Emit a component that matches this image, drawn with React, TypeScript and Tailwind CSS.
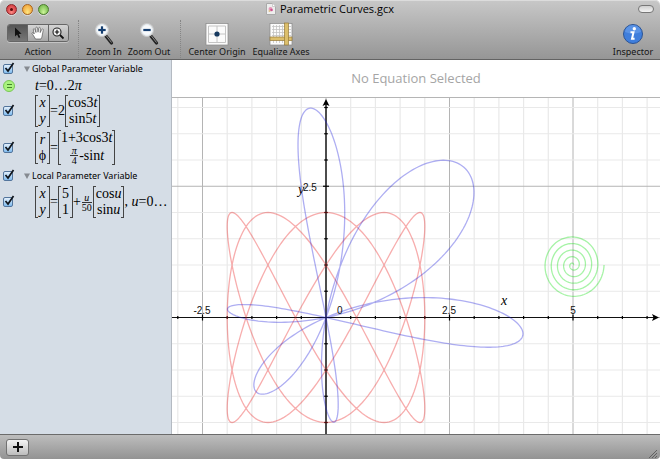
import { type ReactNode } from "react";

const UI = "font-['Noto_Sans','Open_Sans',sans-serif]";

/* ---------- Plot geometry ---------- */
const W = 488;
const H = 336;
const OX = 154;
const OY = 219.5;
const SX = 49.4;
const SY = 52.5;

const px = (x: number) => OX + x * SX;
const py = (y: number) => OY - y * SY;

function curve(fn: (t: number) => [number, number], end: number, steps: number) {
  const points: string[] = [];
  for (let i = 0; i <= steps; i++) {
    const [x, y] = fn((i / steps) * end);
    points.push(`${px(x).toFixed(2)},${py(y).toFixed(2)}`);
  }
  return points.join(" ");
}

const lissajous = curve((t) => [2 * Math.cos(3 * t), 2 * Math.sin(5 * t)], 2 * Math.PI, 600);
const rose = curve(
  (t) => {
    const r = 1 + 3 * Math.cos(3 * t);
    const a = Math.PI / 4 - Math.sin(t);
    return [r * Math.cos(a), r * Math.sin(a)];
  },
  2 * Math.PI,
  600,
);
const spiral = curve((u) => [5 + (u / 50) * Math.cos(u), 1 + (u / 50) * Math.sin(u)], 10 * Math.PI, 500);

const xSteps = Array.from({ length: 20 }, (_, i) => i - 6);
const ySteps = Array.from({ length: 13 }, (_, i) => i - 4);

function Plot() {
  return (
    <svg
      viewBox={`0 0 ${W} ${H}`}
      preserveAspectRatio="xMidYMid slice"
      className="block h-full w-full"
      role="img"
      aria-label="Graph of three parametric curves"
    >
      {xSteps.map((i) => (
        <line key={i} x1={px(i / 2)} x2={px(i / 2)} y1={0} y2={H} stroke={i % 5 === 0 ? "#b4b4b4" : "#e9e9e9"} strokeWidth={i % 5 === 0 ? 1 : 1.2} />
      ))}
      {ySteps.map((i) => (
        <line key={i} x1={0} x2={W} y1={py(i / 2)} y2={py(i / 2)} stroke={i % 5 === 0 ? "#b4b4b4" : "#e9e9e9"} strokeWidth={i % 5 === 0 ? 1 : 1.2} />
      ))}
      <line x1={OX} x2={OX} y1={6} y2={H} stroke="#4c4c4c" strokeWidth={2} />
      <line x1={0} x2={W - 5} y1={OY} y2={OY} stroke="#111" strokeWidth={1.2} />
      <path d={`M${OX} 1 l3.5 7 l-3.5 -1.5 l-3.5 1.5z`} fill="#000" />
      <path d={`M${W - 1} ${OY} l-7 -3.5 l1.5 3.5 l-1.5 3.5z`} fill="#000" />
      {xSteps.filter((i) => i !== 0).map((i) => (
        <line key={i} x1={px(i / 2)} x2={px(i / 2)} y1={OY - (i % 5 ? 1.5 : 3)} y2={OY + (i % 5 ? 1.5 : 3)} stroke="#000" strokeWidth={1.2} />
      ))}
      {ySteps.filter((i) => i !== 0).map((i) => (
        <line key={i} y1={py(i / 2)} y2={py(i / 2)} x1={OX - (i % 5 ? 1.8 : 3)} x2={OX + (i % 5 ? 1.8 : 3)} stroke="#000" strokeWidth={1.2} />
      ))}
      <g fill="none" strokeWidth={1.3}>
        <polyline points={lissajous} stroke="#e81c1c" strokeOpacity={0.36} />
        <polyline points={rose} stroke="#1f1fdc" strokeOpacity={0.36} />
        <polyline points={spiral} stroke="#20e020" strokeOpacity={0.4} />
      </g>
      <g className="font-['Liberation_Sans',sans-serif] text-[10px]" fill="#111">
        <text x={30} y={216} textAnchor="middle">-2.5</text>
        <text x={165} y={216}>0</text>
        <text x={277} y={216} textAnchor="middle">2.5</text>
        <text x={401} y={216} textAnchor="middle">5</text>
        <text x={131} y={93}>2.5</text>
      </g>
      <g className="font-['Liberation_Serif',serif] text-[14px] italic" fill="#000">
        <text x={126} y={96}>y</text>
        <text x={329} y={207}>x</text>
      </g>
    </svg>
  );
}

/* ---------- Window chrome ---------- */
function Light({ label, tone }: { label: string; tone: string }) {
  return (
    <button aria-label={label} className={`grid size-[11px] place-items-center rounded-full border shadow-[0_1px_0_#d8d8d8] ${tone}`}>
      {label === "Close" && <span className="size-[3px] rounded-full bg-[#5a0a0c]" />}
    </button>
  );
}

function Tool({ label, width, children }: { label: string; width: string; children: ReactNode }) {
  return (
    <button className={`flex flex-col items-center ${width}`}>
      <span className="flex h-[25px] items-center">{children}</span>
      <span className="whitespace-nowrap text-[9px] leading-[12px]">{label}</span>
    </button>
  );
}

function Magnifier({ plus }: { plus?: boolean }) {
  return (
    <svg viewBox="0 0 20 24" className="h-6 w-5">
      <path d="M11.500 13.500 L17.500 21" stroke="#222" strokeWidth="3.2" strokeLinecap="round" />
      <path d="M12.5 14 L17.5 20.5" stroke="#999" strokeWidth="0.9" />
      <circle cx="8" cy="8" r="6.3" fill="#f8fafc" stroke="#c9c9c9" strokeWidth="1.3" />
      <circle cx="8" cy="8" r="5.4" fill="none" stroke="#e4ebf1" />
      <path d="M4.3 8h7.4" stroke="#153e70" strokeWidth="2.200" />
      {plus && <path d="M8 4.3v7.4" stroke="#153e70" strokeWidth="2.200" />}
    </svg>
  );
}

function Separator() {
  return <div className="h-[38px] w-px border-l border-dotted border-[#858585]" />;
}

function Header() {
  return (
    <header className="h-[60px] shrink-0 rounded-t-[5px] border-b border-[#636363] bg-linear-to-b from-[#c8c8c8] to-[#969696] shadow-[inset_0_1px_0_#dcdcdc]">
      <div className="grid h-[18px] grid-cols-[60px_1fr_60px] items-center">
        <div className="flex gap-[5px] pl-[6px]">
          <Light label="Close" tone="border-[#8c2528] bg-radial-[at_50%_80%] from-[#ff8a84] to-[#c72830]" />
          <Light label="Minimize" tone="border-[#a8641c] bg-radial-[at_50%_80%] from-[#ffe680] to-[#ee962b]" />
          <Light label="Zoom" tone="border-[#4b7c2c] bg-radial-[at_50%_80%] from-[#cdf59a] to-[#62ae3c]" />
        </div>
        <h1 className="flex items-center justify-center gap-1 font-['Open_Sans',sans-serif] text-[11px] leading-4 text-black">
          <svg viewBox="0 0 10 12" className="h-3 w-[10px]">
            <path d="M.5.5h6l3 3v8h-9z" fill="#eee" stroke="#aaa" />
            <path d="M6.500.5v3h3" fill="#fff" stroke="#bbb" strokeWidth=".7" />
            <circle cx="4.500" cy="6" r="2" fill="#e79ab8" />
            <circle cx="5.500" cy="7" r="1.300" fill="#cc5190" />
            <circle cx="3.500" cy="8" r="1" fill="#dfc08a" />
          </svg>
          Parametric Curves.gcx
        </h1>
        <div className="flex justify-end pr-[6px]">
          <button aria-label="Toggle toolbar" className="h-2 w-4 rounded-full border border-[#777] bg-linear-to-b from-[#cfcfcf] to-[#f4f4f4]" />
        </div>
      </div>
      <div className="flex items-start pr-[7px] pl-[7px] pt-[2px] text-[#151515]">
        <div className="mr-[9px] flex w-[62px] flex-col items-center pt-[4px]">
          <div className="flex h-[18px] w-full divide-x divide-[#666] overflow-hidden rounded-[3px] border border-[#666] shadow-[0_1px_0_#c4c4c4]" role="group" aria-label="Action">
            <button aria-label="Select" aria-pressed="true" className="grid flex-1 place-items-center bg-linear-to-b from-[#555] to-[#777]">
              <svg viewBox="0 0 10 12" className="h-3 w-[10px]"><path d="M2 .5v9l2.100-2 1.700 3.500 1.500-.8-1.600-3.300 2.900-.2z" fill="#111" /></svg>
            </button>
            <button aria-label="Pan" className="grid flex-1 place-items-center bg-linear-to-b from-[#d4d4d4] to-[#a6a6a6]">
              <svg viewBox="0 0 14 14" className="size-[14px]">
                <path d="M4.500 13 C3.500 11 2 9 1 7.500 C1 6.200 2.300 6.500 3.300 8 L2.300 3.800 C2.200 2.500 3.500 2.300 3.900 3.500 L5 6.500 L4.800 2 C4.900.8 6.300.8 6.500 2 L7 6.200 L7.800 2 C8.200.9 9.400 1.200 9.300 2.400 L9.200 6.600 L10.700 3.500 C11.300 2.500 12.500 3 12.200 4.200 L11.300 9 C11 11 10.500 12 10 13z" fill="#fff" stroke="#444" strokeWidth=".6" strokeLinejoin="round" />
              </svg>
            </button>
            <button aria-label="Magnify" className="grid flex-1 place-items-center bg-linear-to-b from-[#d4d4d4] to-[#a6a6a6]">
              <svg viewBox="0 0 14 14" className="size-[14px]">
                <circle cx="6" cy="6" r="4" fill="#f5f5f5" stroke="#222" strokeWidth="1.100" />
                <path d="M9 9l3.500 3.500" stroke="#111" strokeWidth="1.800" />
                <path d="M3.800 6h4.400M6 3.800v4.400" stroke="#111" strokeWidth="1.200" />
              </svg>
            </button>
          </div>
          <span className="mt-[4px] text-[9px] leading-[12px]">Action</span>
        </div>
        <Separator />
        <div className="ml-[4px] flex pt-[1px]">
          <Tool label="Zoom In" width="w-[42px]"><Magnifier plus /></Tool>
          <Tool label="Zoom Out" width="w-[48px]"><Magnifier /></Tool>
        </div>
        <div className="ml-[7px]"><Separator /></div>
        <div className="ml-[4px] flex pt-[1px]">
          <Tool label="Center Origin" width="w-[64px]">
            <svg viewBox="0 0 24 24" className="size-6">
              <rect x="1" y="1.500" width="22" height="21.500" fill="#fbfbfb" stroke="#888" strokeWidth=".7" />
              <path d="M3.500 4h17v16.500h-17zM12 4v16.500M3.500 12h17" fill="none" stroke="#c4c4c4" />
              <circle cx="12" cy="12" r="2.600" fill="#16395f" />
            </svg>
          </Tool>
          <Tool label="Equalize Axes" width="w-[64px]">
            <svg viewBox="0 0 24 24" className="size-6">
              <rect x="1" y="1.500" width="22" height="21.500" fill="#fbfbfb" stroke="#888" strokeWidth=".7" />
              <path d="M3 4.500h19M3 7.500h19M3 10.500h19M3 13.500h19M4.500 3v18M7.500 3v18M10.500 3v18M13.500 3v18" stroke="#c4c4c4" strokeWidth=".8" />
              <rect x="1" y="15" width="22" height="3.500" fill="#dcbf6c" stroke="#96793a" strokeWidth=".7" />
              <rect x="15.500" y="1" width="4" height="22" fill="#dcbf6c" stroke="#96793a" strokeWidth=".7" />
            </svg>
          </Tool>
        </div>
        <div className="ml-auto pt-[1px]">
          <Tool label="Inspector" width="w-[40px]">
            <svg viewBox="0 0 22 22" className="size-[22px]">
              <circle cx="11" cy="11" r="9.500" fill="#3f7edc" stroke="#2c5494" />
              <path d="M3 9a8 7 0 0 1 16 0q-8 3-16 0" fill="#6da2ec" opacity=".6" />
              <circle cx="12.300" cy="5.800" r="1.700" fill="#fff" />
              <path d="M8.500 9.300h3L10 15.800h2.600" fill="none" stroke="#fff" strokeWidth="2" />
            </svg>
          </Tool>
        </div>
      </div>
    </header>
  );
}

/* ---------- Sidebar ---------- */
function Check({ label }: { label: string }) {
  return (
    <span className="relative block h-[10px] w-[10px]">
      <input
        type="checkbox"
        defaultChecked
        aria-label={label}
        className="peer block size-[10px] appearance-none rounded-[2px] border border-[#53759c] bg-linear-to-b from-[#e2effb] to-[#80bcef]"
      />
      <svg viewBox="0 0 12 12" className="pointer-events-none absolute -top-[2px] left-0 hidden size-3 peer-checked:block">
        <path d="M2.500 6l2.500 3 5.500-8" fill="none" stroke="#10151c" strokeWidth="1.700" />
      </svg>
    </span>
  );
}

function Row({ mark, height, children }: { mark: ReactNode; height: string; children: ReactNode }) {
  return (
    <li className={`grid grid-cols-[24px_1fr] items-center ${height}`}>
      <span className="pl-[3px]">{mark}</span>
      {children}
    </li>
  );
}

function Group({ label }: { label: string }) {
  return (
    <h2 className="flex items-center gap-[2px] whitespace-nowrap text-[9px] leading-3 text-black">
      <svg viewBox="0 0 6 6" className="size-[6px]"><path d="M0 .5h6L3 6z" fill="#858a90" /></svg>
      {label}
    </h2>
  );
}

function Matrix({ top, bottom }: { top: ReactNode; bottom: ReactNode }) {
  return (
    <span className="inline-flex items-stretch">
      <span className="w-[3px] border-y border-l border-[#444]" />
      <span className="flex min-w-[9px] flex-col items-center justify-center text-center">
        <span className="block">{top}</span>
        <span className="flex items-center">{bottom}</span>
      </span>
      <span className="w-[3px] border-y border-r border-[#444]" />
    </span>
  );
}

function Fraction({ top, bottom }: { top: string; bottom: string }) {
  return (
    <span className="mx-px inline-flex flex-col items-center text-[10px] leading-[9px]">
      <span className="w-full min-w-[8px] border-b border-[#333] text-center italic">{top}</span>
      <span>{bottom}</span>
    </span>
  );
}

function Formula({ children }: { children: ReactNode }) {
  return (
    <div className="flex items-center whitespace-nowrap pl-[11px] font-['Liberation_Serif',serif] text-[14px] leading-4 text-black">
      {children}
    </div>
  );
}

function Sidebar() {
  return (
    <aside className="w-[172px] shrink-0 border-r border-[#b4bac2] bg-[#d5dde6]">
      <ul>
        <Row height="h-[17px]" mark={<Check label="Global Parameter Variable" />}><Group label="Global Parameter Variable" /></Row>
        <Row
          height="h-[17px]"
          mark={
            <span className="grid size-3 place-items-center rounded-full border border-[#7ac657] bg-[#a9f37e]">
              <span className="h-[4px] w-[5px] border-y border-[#43862a]" />
            </span>
          }
        >
          <Formula><i>t</i>=0…2<i>π</i></Formula>
        </Row>
        <Row height="h-[34px]" mark={<Check label="x, y curve" />}>
          <Formula>
            <Matrix top={<i>x</i>} bottom={<i>y</i>} />=2
            <Matrix top={<>cos3<i>t</i></>} bottom={<>sin5<i>t</i></>} />
          </Formula>
        </Row>
        <Row height="h-[39px]" mark={<Check label="Polar curve" />}>
          <Formula>
            <Matrix top={<i>r</i>} bottom="ϕ" />=
            <Matrix top={<>1+3cos3<i>t</i></>} bottom={<><Fraction top="π" bottom="4" />-sin<i>t</i></>} />
          </Formula>
        </Row>
        <Row height="h-[18px]" mark={<Check label="Local Parameter Variable" />}><Group label="Local Parameter Variable" /></Row>
        <Row height="h-[34px]" mark={<Check label="Spiral curve" />}>
          <Formula>
            <Matrix top={<i>x</i>} bottom={<i>y</i>} />=
            <Matrix top="5" bottom="1" />+
            <Fraction top="u" bottom="50" />
            <Matrix top={<>cos<i>u</i></>} bottom={<>sin<i>u</i></>} />
            <span>, <i>u</i>=0…</span>
          </Formula>
        </Row>
      </ul>
    </aside>
  );
}

export default function App() {
  return (
    <div className={`flex h-screen flex-col overflow-hidden bg-white ${UI}`}>
      <Header />
      <div className="flex min-h-0 flex-1">
        <Sidebar />
        <main className="flex min-w-0 flex-1 flex-col bg-white">
          <p className="flex h-[38px] shrink-0 items-center justify-center border-b border-[#b5b5b5] font-['Open_Sans',sans-serif] text-[13px] text-[#a5a5a5]">
            No Equation Selected
          </p>
          <div className="min-h-0 flex-1">
            <Plot />
          </div>
        </main>
      </div>
      <footer className="flex h-[25px] shrink-0 items-center justify-between rounded-b-[4px] border-t border-[#6b6b6b] bg-linear-to-b from-[#bdbdbd] to-[#939393] pl-[6px] pr-[2px]">
        <button aria-label="Add equation" className="grid h-[17px] w-[23px] place-items-center rounded-[3px] border border-[#717171] bg-linear-to-b from-[#f4f4f4] to-[#bcbcbc]">
          <svg viewBox="0 0 10 10" className="size-[10px]"><path d="M0 5h10M5 0v10" stroke="#111" strokeWidth="2" /></svg>
        </button>
        <svg viewBox="0 0 10 10" className="size-[10px] self-end">
          <path d="M1 9l8-8M4 9l5-5M7 9l2-2" stroke="#5a5a5a" strokeWidth=".9" />
        </svg>
      </footer>
    </div>
  );
}
